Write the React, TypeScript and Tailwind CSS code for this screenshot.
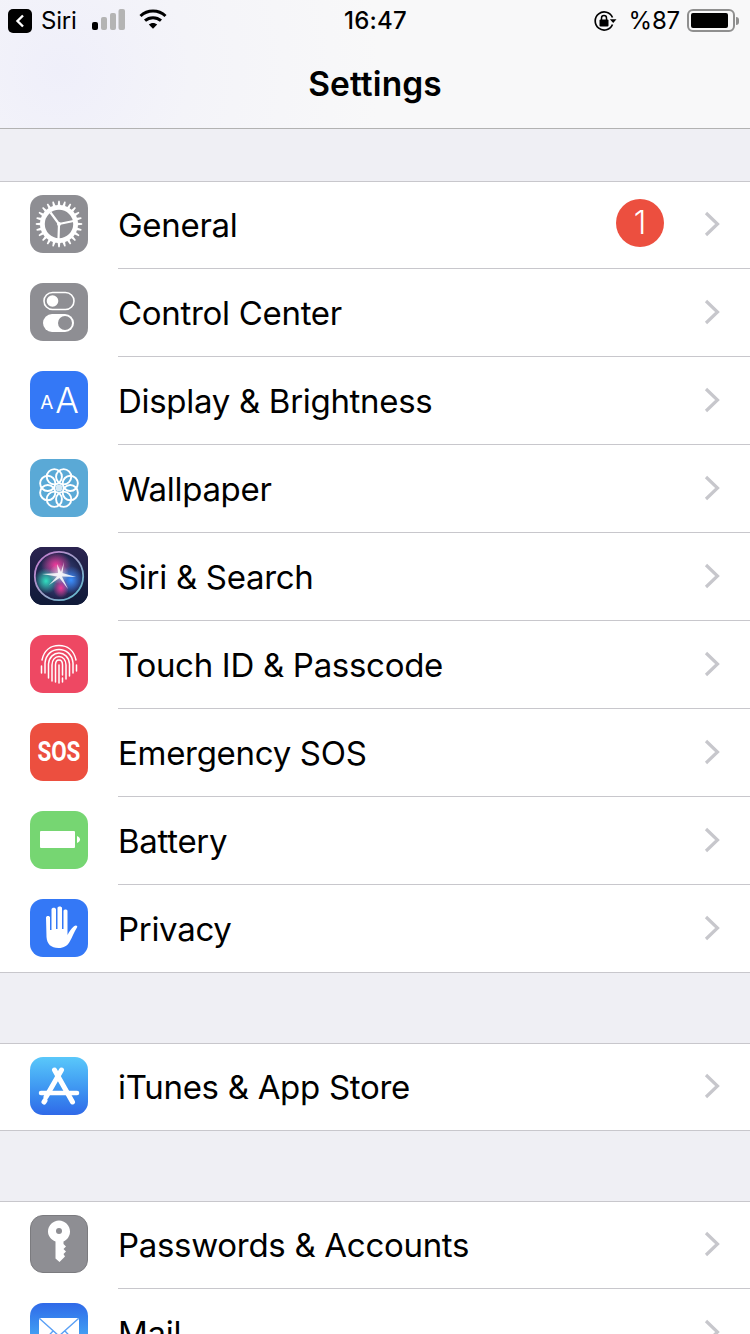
import React from "react";

const FONT = "font-['Inter','Liberation_Sans',sans-serif]";

function Tile({ className = "", children }: { className?: string; children?: React.ReactNode }) {
  return (
    <div className={`relative w-[58px] h-[58px] rounded-[13px] overflow-hidden shrink-0 ${className}`}>{children}</div>
  );
}

function gearPath() {
  const cx = 29, cy = 29, teeth = 24;
  let d = "";
  for (let i = 0; i < teeth; i++) {
    const step = (Math.PI * 2) / teeth;
    const a = i * step;
    const pts: [number, number][] = [
      [19, a - step * 0.5],
      [19, a - step * 0.26],
      [23.2, a - step * 0.12],
      [23.2, a + step * 0.12],
      [19, a + step * 0.26],
    ];
    for (const [r, t] of pts) {
      d += `${d ? "L" : "M"}${(cx + r * Math.cos(t)).toFixed(2)} ${(cy + r * Math.sin(t)).toFixed(2)}`;
    }
  }
  return d + "Z";
}

function GeneralIcon() {
  return (
    <Tile className="bg-[#8e8e93]">
      <svg viewBox="0 0 58 58" className="w-full h-full">
        <path d={gearPath()} fill="#fff" />
        <circle cx="29" cy="29" r="14.2" fill="#8e8e93" />
        <path d="M29 29L20.500 17.500M29 29L43.500 26M29 29L28.500 44" stroke="#fff" strokeWidth="2.200" fill="none" />
        <circle cx="29" cy="29" r="2" fill="#fff" />
      </svg>
    </Tile>
  );
}

function ControlIcon() {
  return (
    <Tile className="bg-[#8e8e93]">
      <svg viewBox="0 0 58 58" className="w-full h-full">
        <rect x="14" y="9.500" width="30" height="17" rx="8.500" fill="none" stroke="#fff" strokeWidth="1.600" />
        <circle cx="22.500" cy="18" r="5.800" fill="#fff" />
        <rect x="13" y="31" width="31" height="18" rx="9" fill="#fff" />
        <circle cx="35" cy="40" r="7" fill="#8e8e93" />
      </svg>
    </Tile>
  );
}

function DisplayIcon() {
  return (
    <Tile className="bg-[#3478f6] flex items-end justify-center font-['Inter',sans-serif] text-white">
      <div className="flex items-end gap-[3px] pb-[14px] pl-[1px]">
        <span className="text-[19px] font-normal leading-[19px] mb-[3px] -mr-[1px]">A</span>
        <span className="text-[35px] font-light leading-[30px]">A</span>
      </div>
    </Tile>
  );
}

function WallpaperIcon() {
  const petals = Array.from({ length: 8 }, (_, i) => i * 45 + 22.5);
  return (
    <Tile className="bg-[#5aa9d6]">
      <svg viewBox="0 0 58 58" className="w-full h-full">
        {petals.map((a) => (
          <circle
            key={a}
            cx={29 + 12.2 * Math.cos((a * Math.PI) / 180)}
            cy={29 + 12.2 * Math.sin((a * Math.PI) / 180)}
            r="7.600"
            fill="none"
            stroke="#fff"
            strokeWidth="1.900"
          />
        ))}
        <circle cx="29" cy="29" r="3.400" fill="#fff" fillOpacity="0.75" />
      </svg>
    </Tile>
  );
}

function SiriIcon() {
  return (
    <Tile className="bg-[#14183c]">
      <svg viewBox="0 0 58 58" className="w-full h-full">
        <defs>
          <linearGradient id="siriBg" x1="0" y1="0" x2="0" y2="1">
            <stop offset="0" stopColor="#2b2450" />
            <stop offset="1" stopColor="#0f1a38" />
          </linearGradient>
          <linearGradient id="siriRing" x1="0" y1="0" x2="1" y2="1">
            <stop offset="0" stopColor="#c878d0" />
            <stop offset="0.5" stopColor="#a0a0c8" />
            <stop offset="1" stopColor="#58c0d0" />
          </linearGradient>
          <radialGradient id="siriDisc">
            <stop offset="0" stopColor="#4a5a98" />
            <stop offset="1" stopColor="#1c2048" />
          </radialGradient>
          <radialGradient id="siriPink">
            <stop offset="0" stopColor="#f0389a" />
            <stop offset="1" stopColor="#e8409a" stopOpacity="0" />
          </radialGradient>
          <radialGradient id="siriTeal">
            <stop offset="0" stopColor="#30e0c0" />
            <stop offset="1" stopColor="#34d0b8" stopOpacity="0" />
          </radialGradient>
          <radialGradient id="siriBlue">
            <stop offset="0" stopColor="#3a90ff" />
            <stop offset="1" stopColor="#3a80f0" stopOpacity="0" />
          </radialGradient>
          <radialGradient id="siriGlow">
            <stop offset="0" stopColor="#fff" stopOpacity="0.6" />
            <stop offset="1" stopColor="#fff" stopOpacity="0" />
          </radialGradient>
        </defs>
        <rect width="58" height="58" fill="url(#siriBg)" />
        <circle cx="29" cy="29" r="24" fill="url(#siriDisc)" />
        <ellipse cx="26" cy="18" rx="15" ry="13" fill="url(#siriPink)" />
        <ellipse cx="16" cy="34" rx="12" ry="13" fill="url(#siriTeal)" />
        <ellipse cx="41" cy="33" rx="13" ry="14" fill="url(#siriBlue)" />
        <ellipse cx="31" cy="41" rx="8" ry="10" fill="url(#siriPink)" />
        <circle cx="29" cy="27" r="10" fill="url(#siriGlow)" />
        <path d="M31 25L34 15L32.500 26L46 30L32 29.500L38 42L29.500 31L19 38L27 29.500L12 27L28 26L27 17Z" fill="#fff" fillOpacity="0.85" />
        <circle cx="29" cy="29" r="24.200" fill="none" stroke="url(#siriRing)" strokeWidth="1.800" />
      </svg>
    </Tile>
  );
}

function TouchIcon() {
  return (
    <Tile className="bg-[#ee4863]">
      <svg viewBox="0 0 58 58" fill="none" stroke="#fff" strokeWidth="1.500" strokeLinecap="round" className="w-full h-full">
        <path d="M12 25C14 15 21 10.500 29 10.500C37 10.500 44 15 46 25" />
        <path d="M11.500 31V38" />
        <path d="M46.500 30V36" />
        <path d="M15 38V28C16 19 22 14.500 29 14.500C36 14.500 42 19 43 28V38" />
        <path d="M18.500 43V29C19 22 24 18 29 18C34 18 39 22 39.500 29V41" />
        <path d="M22 46V30C22 25 25 21.500 29 21.500C33 21.500 36 25 36 30V44" />
        <path d="M25.500 47V30C25.500 27 27 25 29 25C31 25 32.500 27 32.500 30V40M32.500 43V47" />
        <path d="M29 30V48" />
      </svg>
    </Tile>
  );
}

function SosIcon() {
  return (
    <Tile className="bg-[#ec4f3f] flex items-center justify-center">
      <span className="font-['Roboto',sans-serif] font-bold text-[28px] leading-none text-white scale-x-[0.8] tracking-[0px]">SOS</span>
    </Tile>
  );
}

function BatteryIcon() {
  return (
    <Tile className="bg-[#76d672]">
      <svg viewBox="0 0 58 58" className="w-full h-full">
        <rect x="10" y="20" width="35" height="17" rx="1" fill="#fff" />
        <path d="M47 25C49 26 50 27 50 28.500C50 30 49 31 47 32Z" fill="#fff" />
      </svg>
    </Tile>
  );
}

function HandIcon() {
  return (
    <Tile className="bg-[#3478f6]">
      <svg viewBox="0 0 58 58" className="w-full h-full">
        <path
          fill="#fff"
          d="M16 18.500C16 16.500 20 16.500 20 18.500V31H21.500V10.500C21.500 8 26 8 26 10.500V30H27.500V9C27.500 7 32 7 32 9V30H33.500V12C33.500 10 37.500 10 37.500 12V36C39 33 41 29.500 44 27.200C46 25.700 48 26.800 47 28.500C44 33 42.500 38 39.500 43C37.500 46.500 34 49 28.500 49C21 49 17 45 16.500 38Z"
        />
      </svg>
    </Tile>
  );
}

function StoreIcon() {
  return (
    <Tile className="bg-gradient-to-b from-[#5ac8fa] to-[#3069e8]">
      <svg viewBox="0 0 58 58" fill="none" stroke="#fff" strokeLinecap="round" className="w-full h-full">
        <path d="M31.500 13L16 40" strokeWidth="5" />
        <path d="M24.500 13L42.500 45" strokeWidth="5" />
        <path d="M11 36H47" strokeWidth="4.500" />
        <path d="M15 43.500L14 45" strokeWidth="5" />
      </svg>
    </Tile>
  );
}

function KeyIcon() {
  return (
    <Tile className="bg-[#8e8e93] border border-[#7b7b7f]">
      <svg viewBox="0 0 56 56" className="w-full h-full">
        <path
          fill="#fff"
          d="M28 4.500C34 4.500 39 9.500 39 15.500C39 20 36.500 23.500 32.500 25.500V28L35 30.500L32.500 33L35 35.500L32.500 38L34 40.500L28.500 46L24.500 42.500V25.500C20 23.500 17 20 17 15.500C17 9.500 22 4.500 28 4.500Z"
        />
        <circle cx="28" cy="15" r="3" fill="#8e8e93" />
      </svg>
    </Tile>
  );
}

function MailIcon() {
  return (
    <Tile className="bg-gradient-to-b from-[#3069e8] to-[#5ac8fa]">
      <svg viewBox="0 0 58 58" className="w-full h-full">
        <rect x="9" y="15" width="40" height="28" rx="2" fill="#fff" />
        <path d="M9.500 15.500L29 33L48.500 15.500M9.500 42.500L23 28M48.500 42.500L35 28" fill="none" stroke="#5aa0f5" strokeWidth="1.400" />
      </svg>
    </Tile>
  );
}

function Chevron() {
  return (
    <svg viewBox="0 0 16 26" className="w-[16px] h-[26px] shrink-0 -mt-[2px]" fill="none" stroke="#c7c7cc" strokeWidth="3.200">
      <path d="M2 2L13.500 13L2 24" />
    </svg>
  );
}

function Row({
  icon,
  label,
  badge,
  last,
}: {
  icon: React.ReactNode;
  label: string;
  badge?: string;
  last?: boolean;
}) {
  return (
    <div className={`flex h-[88px] pl-[30px] ${last ? "border-b border-[#c8c7cc]" : ""}`}>
      <div className="mt-[14px]">{icon}</div>
      <div className={`ml-[30px] flex-1 flex items-center pr-[30px] ${last ? "" : "border-b border-[#c8c7cc]"}`}>
        <span className="flex-1 text-[33px] leading-none text-black tracking-[-0.3px] pt-[2px]">{label}</span>
        {badge && (
          <span className="w-[48px] h-[48px] rounded-full bg-[#ec4f3f] text-white text-[32px] font-light flex items-center justify-center mr-[40px] -mt-[3px] leading-none">
            {badge}
          </span>
        )}
        <Chevron />
      </div>
    </div>
  );
}

function Group({ children }: { children: React.ReactNode }) {
  return <div className="bg-white shadow-[inset_0_1px_0_#c8c7cc]">{children}</div>;
}

function Signal() {
  return (
    <svg viewBox="0 0 34 22" className="w-[34px] h-[22px] ml-[15px]">
      <rect x="0" y="13" width="6" height="8" rx="2" fill="#000" />
      <rect x="9" y="8" width="6" height="13" rx="2" fill="#b4b4b4" />
      <rect x="18" y="4" width="6" height="17" rx="2" fill="#b4b4b4" />
      <rect x="26.500" y="0" width="6.500" height="21" rx="2" fill="#b4b4b4" />
    </svg>
  );
}

function Wifi() {
  return (
    <svg viewBox="0 0 28 20" className="w-[28px] h-[20px] ml-[13px]" fill="none" stroke="#000" strokeWidth="3">
      <path d="M1.500 7C8.500 0.300 19.500 0.300 26.500 7" />
      <path d="M6 11.700C10.500 7.600 17.500 7.600 22 11.700" />
      <path d="M14 19.800L9.800 15.600C12 13.400 16 13.400 18.200 15.600Z" fill="#000" stroke="none" />
    </svg>
  );
}

function RotationLock() {
  return (
    <svg viewBox="0 0 24 22" className="w-[24px] h-[22px] ml-[1px]">
      <path d="M19.500 14.500A9 9 0 1 1 19.500 7.500" fill="none" stroke="#000" strokeWidth="1.700" />
      <path d="M16.800 9.300H23.500L20.200 13Z" fill="#000" />
      <rect x="6.500" y="9.500" width="9" height="7" rx="1" fill="#000" />
      <path d="M8.500 10V8C8.500 4.800 13.500 4.800 13.500 8V10" fill="none" stroke="#000" strokeWidth="1.500" />
    </svg>
  );
}

function StatusBattery() {
  return (
    <div className="flex items-center">
      <div className="w-[48px] h-[23px] rounded-[6px] border-2 border-[#8f8f8f] p-[2px]">
        <div className="h-full w-[37px] bg-black rounded-[2px]" />
      </div>
      <div className="w-[3px] h-[8px] ml-[1px] bg-[#8f8f8f] rounded-r-[3px]" />
    </div>
  );
}

export default function App() {
  return (
    <div className={`w-[750px] h-[1334px] overflow-hidden bg-[#efeff4] flex flex-col ${FONT}`}>
      <div className="h-[129px] shrink-0 border-b border-[#b2b2b2] bg-[radial-gradient(circle_at_60px_70px,#efeffa_0,#f4f4f9_130px,#f8f8f9_320px)]">
        <div className="h-[40px] pt-[9px] pl-[8px] pr-[11px] flex items-start relative text-[24px] leading-[24px] text-black">
          <div className="w-[24px] h-[24px] rounded-[5px] bg-black flex items-center justify-center">
            <svg viewBox="0 0 10 14" className="w-[10px] h-[14px]" fill="none" stroke="#fff" strokeWidth="2.400">
              <path d="M8 1.500L2.500 7L8 12.500" />
            </svg>
          </div>
          <span className="ml-[9px] tracking-[-0.2px]">Siri</span>
          <Signal />
          <Wifi />
          <span className="absolute left-0 right-0 top-[9px] text-center font-medium tracking-[0.2px] pl-px">16:47</span>
          <div className="ml-auto flex items-center gap-[12px]">
            <RotationLock />
            <span className="tracking-[-0.2px] mr-[-6px]">%87</span>
            <div className="ml-[1px] -mt-[1px]"><StatusBattery /></div>
          </div>
        </div>
        <div className="text-center font-semibold text-[33.5px] leading-[40px] text-black mt-[24px] tracking-[0.1px]">Settings</div>
      </div>
      <div className="h-[52px] shrink-0" />
      <Group>
        <Row icon={<GeneralIcon />} label="General" badge="1" />
        <Row icon={<ControlIcon />} label="Control Center" />
        <Row icon={<DisplayIcon />} label="Display & Brightness" />
        <Row icon={<WallpaperIcon />} label="Wallpaper" />
        <Row icon={<SiriIcon />} label="Siri & Search" />
        <Row icon={<TouchIcon />} label="Touch ID & Passcode" />
        <Row icon={<SosIcon />} label="Emergency SOS" />
        <Row icon={<BatteryIcon />} label="Battery" />
        <Row icon={<HandIcon />} label="Privacy" last />
      </Group>
      <div className="h-[70px] shrink-0" />
      <Group>
        <Row icon={<StoreIcon />} label="iTunes & App Store" last />
      </Group>
      <div className="h-[70px] shrink-0" />
      <Group>
        <Row icon={<KeyIcon />} label="Passwords & Accounts" />
        <Row icon={<MailIcon />} label="Mail" />
      </Group>
    </div>
  );
}
